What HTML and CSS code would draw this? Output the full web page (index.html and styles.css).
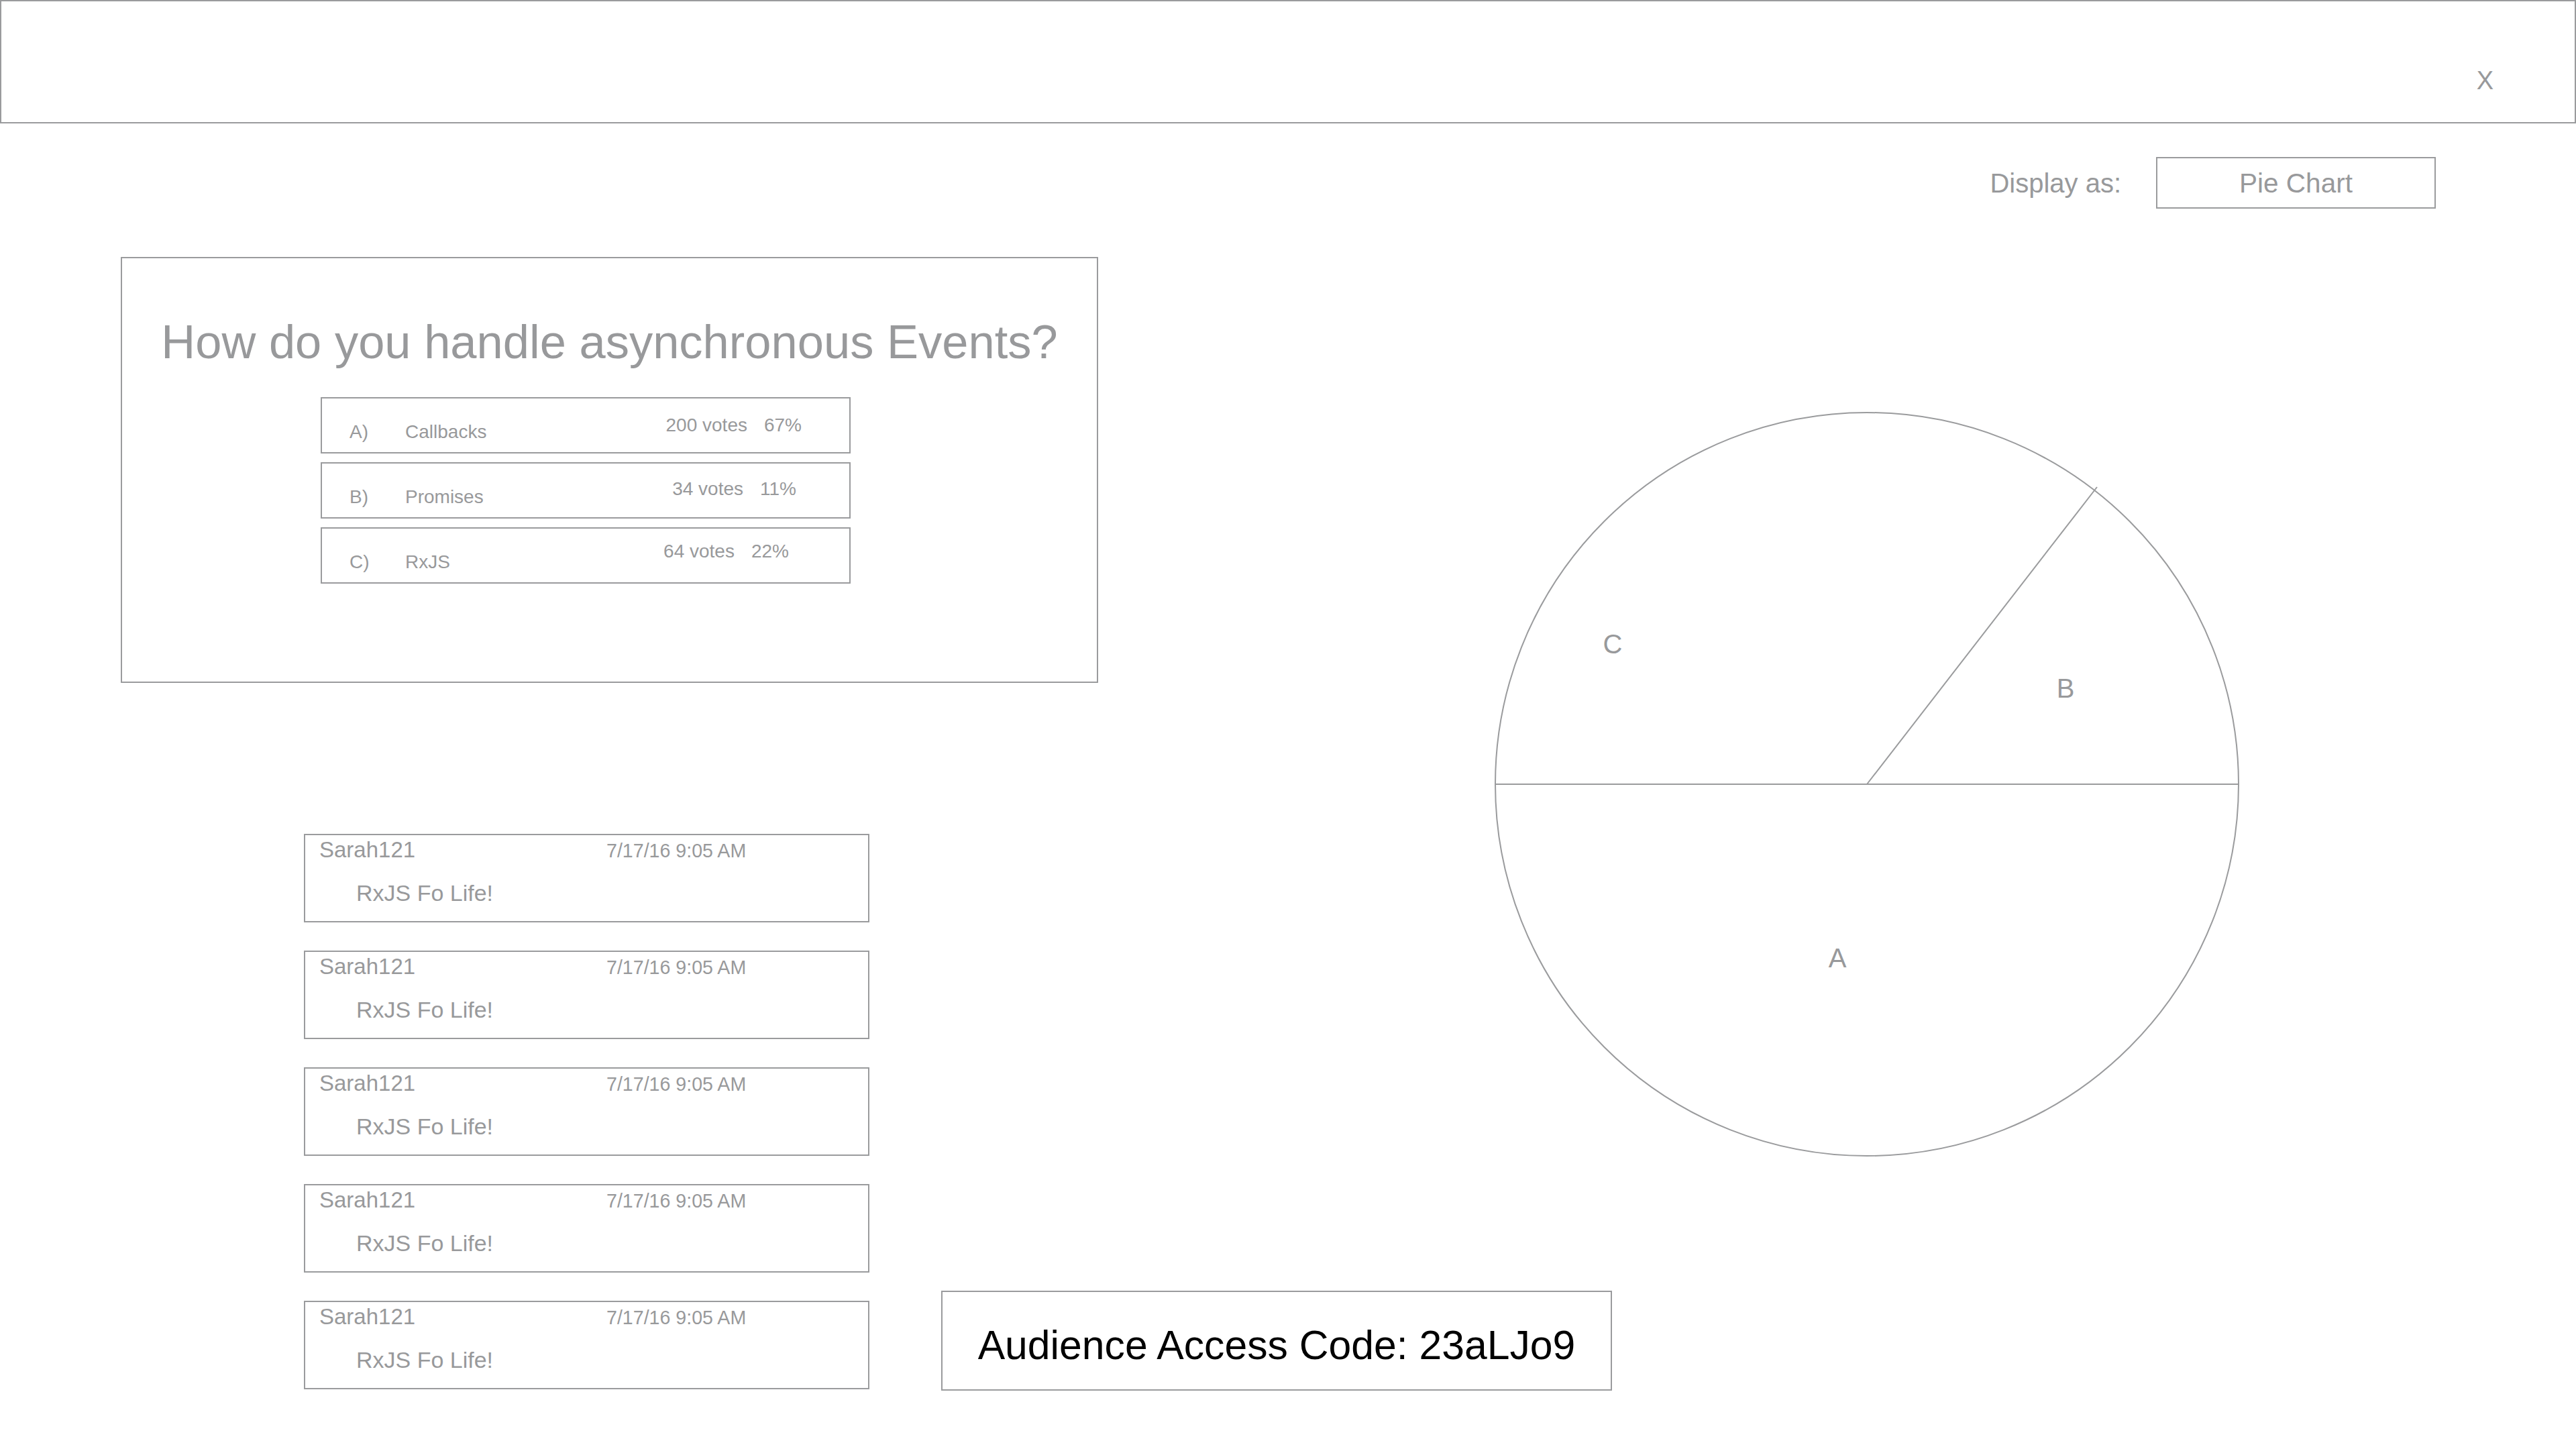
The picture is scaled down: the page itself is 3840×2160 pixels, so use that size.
FILE: index.html
```html
<!DOCTYPE html>
<html lang="en">
<head>
<meta charset="utf-8">
<title>Poll Results</title>
<link rel="stylesheet" href="styles.css">
</head>
<body>
<div class="page">
  <header class="topbar"><span class="close">X</span></header>

  <div class="display-row">
    <span class="display-label">Display as:</span>
    <div class="select">Pie Chart</div>
  </div>

  <main class="main">
    <div class="left">
      <section class="question">
        <h1 class="title">How do you handle asynchronous Events?</h1>
        <ul class="options">
          <li class="opt opt-a"><span class="letter">A)</span><span class="name">Callbacks</span><span class="votes">200 votes<span class="pct">67%</span></span></li>
          <li class="opt opt-b"><span class="letter">B)</span><span class="name">Promises</span><span class="votes">34 votes<span class="pct">11%</span></span></li>
          <li class="opt opt-c"><span class="letter">C)</span><span class="name">RxJS</span><span class="votes">64 votes<span class="pct">22%</span></span></li>
        </ul>
      </section>

      <div class="feed">
        <ul class="chats">
          <li class="chat"><div class="chat-head"><span class="user">Sarah121</span><span class="time">7/17/16 9:05 AM</span></div><div class="msg">RxJS Fo Life!</div></li>
          <li class="chat"><div class="chat-head"><span class="user">Sarah121</span><span class="time">7/17/16 9:05 AM</span></div><div class="msg">RxJS Fo Life!</div></li>
          <li class="chat"><div class="chat-head"><span class="user">Sarah121</span><span class="time">7/17/16 9:05 AM</span></div><div class="msg">RxJS Fo Life!</div></li>
          <li class="chat"><div class="chat-head"><span class="user">Sarah121</span><span class="time">7/17/16 9:05 AM</span></div><div class="msg">RxJS Fo Life!</div></li>
          <li class="chat"><div class="chat-head"><span class="user">Sarah121</span><span class="time">7/17/16 9:05 AM</span></div><div class="msg">RxJS Fo Life!</div></li>
        </ul>
        <div class="code">Audience Access Code: 23aLJo9</div>
      </div>
    </div>

    <div class="chart">
      <svg class="pie" width="1120" height="1120" viewBox="0 0 1120 1120">
        <circle cx="560" cy="560" r="554" fill="none" stroke="#9a9b9d" stroke-width="2"/>
        <line x1="6" y1="560" x2="1114" y2="560" stroke="#9a9b9d" stroke-width="2"/>
        <line x1="560" y1="560" x2="903" y2="117" stroke="#9a9b9d" stroke-width="2"/>
        <text class="pie-label" x="181" y="351">C</text>
        <text class="pie-label" x="856" y="417">B</text>
        <text class="pie-label" x="516" y="819">A</text>
      </svg>
    </div>
  </main>
</div>
</body>
</html>
```

FILE: styles.css
```css
html, body {
  margin: 0;
  padding: 0;
  background: #ffffff;
}

body {
  font-family: "Liberation Sans", Arial, Helvetica, sans-serif;
  color: #98999b;
}

.page {
  width: 3840px;
  height: 2160px;
  overflow: hidden;
}

/* top bar */
.topbar {
  box-sizing: border-box;
  height: 184px;
  border: 2px solid #9a9b9d;
  display: flex;
  justify-content: flex-end;
  align-items: flex-start;
  padding: 96px 121px 0 0;
}

.close {
  font-size: 38px;
  line-height: 44px;
}

/* display selector */
.display-row {
  display: flex;
  justify-content: flex-end;
  align-items: center;
  gap: 52px;
  margin-top: 50px;
  padding-right: 209px;
}

.display-label {
  font-size: 40px;
  line-height: 47px;
  padding-top: 2px;
}

.select {
  box-sizing: border-box;
  width: 417px;
  height: 77px;
  border: 2px solid #9a9b9d;
  display: flex;
  align-items: center;
  justify-content: center;
  padding-top: 2px;
  font-size: 40.5px;
  line-height: 47px;
}

/* main grid */
.main {
  display: grid;
  grid-template-columns: 2043px 1fr;
  margin-top: 72px;
  padding-left: 180px;
}

.left {
  display: flex;
  flex-direction: column;
  align-items: flex-start;
}

/* question card */
.question {
  box-sizing: border-box;
  width: 1457px;
  height: 635px;
  border: 2px solid #9a9b9d;
  padding-top: 85px;
}

.title {
  margin: 0;
  font-size: 70.5px;
  line-height: 80px;
  font-weight: normal;
  text-align: center;
}

.options {
  list-style: none;
  margin: 42px 0 0 296px;
  padding: 0;
  width: 790px;
  display: flex;
  flex-direction: column;
  gap: 13px;
}

.opt {
  box-sizing: border-box;
  height: 84px;
  border: 2px solid #9a9b9d;
  display: flex;
  align-items: flex-start;
  padding-left: 41px;
  font-size: 28px;
  line-height: 32px;
}

.letter {
  width: 83px;
  margin-top: 34px;
}

.name {
  margin-top: 34px;
}

.votes {
  margin-left: auto;
  margin-top: 22px;
}

.pct {
  margin-left: 25px;
}

.opt-a { padding-right: 71px; }
.opt-a .votes { margin-top: 24px; }
.opt-b { padding-right: 79px; }
.opt-b .votes { margin-top: 22px; }
.opt-c { padding-right: 90px; }
.opt-c .votes { margin-top: 18px; }

/* chat feed + access code */
.feed {
  display: flex;
  align-items: flex-end;
  margin-top: 225px;
  margin-left: 273px;
}

.chats {
  list-style: none;
  margin: 0;
  padding: 0;
  display: flex;
  flex-direction: column;
  gap: 42px;
}

.chat {
  box-sizing: border-box;
  width: 843px;
  height: 132px;
  border: 2px solid #9a9b9d;
  padding: 4px 20px 0 21px;
}

.chat-head {
  display: flex;
  align-items: baseline;
}

.user {
  width: 428px;
  font-size: 33px;
  line-height: 36px;
}

.time {
  font-size: 28.6px;
  line-height: 32px;
}

.msg {
  margin-top: 27px;
  margin-left: 55px;
  font-size: 34px;
  line-height: 38px;
}

.code {
  box-sizing: border-box;
  width: 1000px;
  height: 149px;
  margin-left: 107px;
  margin-bottom: -2px;
  border: 2px solid #9a9b9d;
  padding-top: 44px;
  color: #000000;
  font-size: 60.7px;
  line-height: 70px;
  text-align: center;
}

/* pie chart */
.chart {
  min-width: 0;
}

.pie {
  display: block;
  margin-top: 226px;
}

.pie-label {
  font-family: "Liberation Sans", Arial, Helvetica, sans-serif;
  font-size: 40px;
  fill: #98999b;
  text-anchor: middle;
  dominant-baseline: central;
}
```
